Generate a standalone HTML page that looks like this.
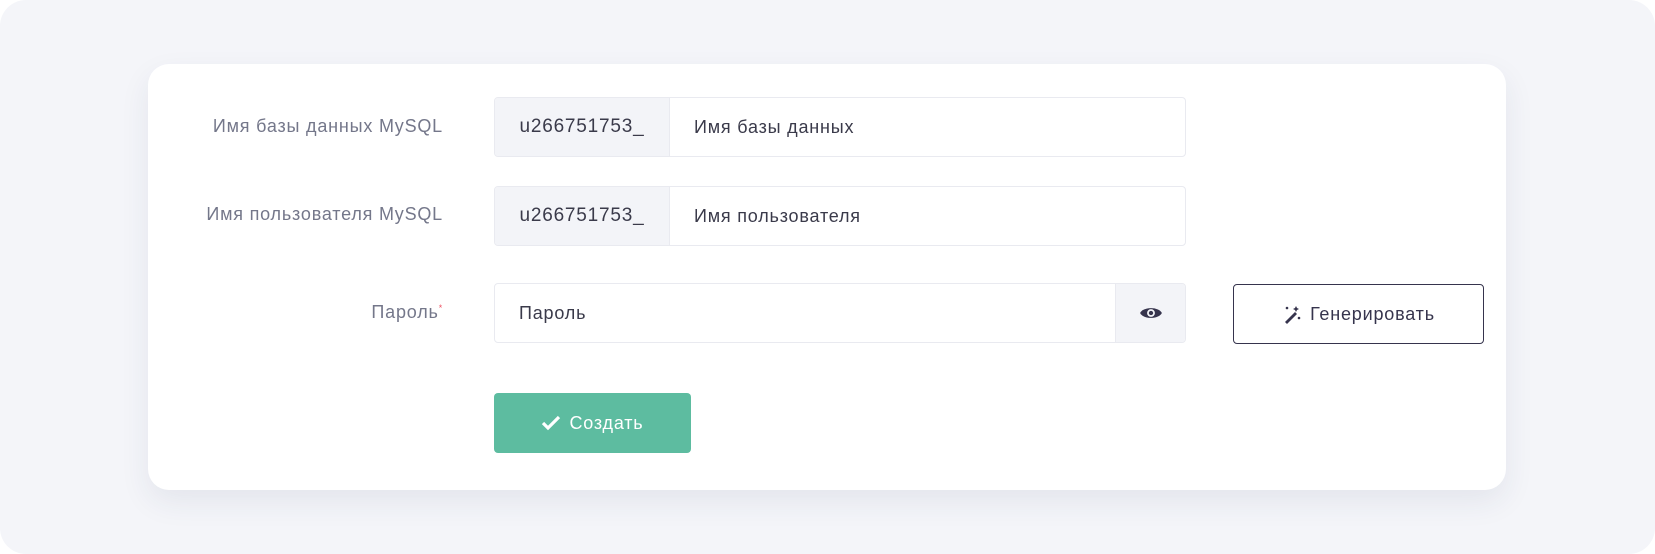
<!DOCTYPE html>
<html><head><meta charset="utf-8"><style>
body{margin:0;width:1655px;height:554px;background:#fff;font-family:"Liberation Sans",sans-serif;overflow:hidden;letter-spacing:0.8px}
.bg{position:absolute;left:0;top:0;width:1655px;height:554px;background:#f4f5f9;border-radius:26px}
.card{position:absolute;left:148px;top:64px;width:1358px;height:426px;background:#fff;border-radius:21px;box-shadow:0 12px 30px rgba(40,50,90,.08)}
.lbl{position:absolute;right:1212px;font-size:18px;color:#74778a;text-align:right;white-space:nowrap}
.in{position:absolute;left:494px;width:692px;height:60px;border:1px solid #e9eaf0;border-radius:4px;box-sizing:border-box;display:flex;overflow:hidden;font-size:18px}
.pre{width:174px;background:#f3f4f8;border-right:1px solid #e9eaf0;display:flex;align-items:center;justify-content:center;color:#3a3a4a;font-size:19px}
.ph{display:flex;align-items:center;padding-left:24px;color:#3a3a4a;flex:1}
.eye{width:69px;background:#f3f4f8;border-left:1px solid #e9eaf0;display:flex;align-items:center;justify-content:center}
.gen{position:absolute;left:1233px;top:284px;width:251px;height:60px;border:1px solid #36344d;border-radius:4px;box-sizing:border-box;display:flex;align-items:center;justify-content:center;font-size:18px;color:#36344d;gap:8px}
.btn{position:absolute;left:494px;top:393px;width:197px;height:60px;background:#5dbca0;border-radius:4px;color:#fff;display:flex;align-items:center;justify-content:center;font-size:18px;gap:8px}
</style></head><body>
<div class="bg"></div>
<div class="card"></div>
<div class="lbl" style="top:116px">Имя базы данных MySQL</div>
<div class="in" style="top:97px"><div class="pre">u266751753_</div><div class="ph">Имя базы данных</div></div>
<div class="lbl" style="top:204px">Имя пользователя MySQL</div>
<div class="in" style="top:186px"><div class="pre">u266751753_</div><div class="ph">Имя пользователя</div></div>
<div class="lbl" style="top:302px">Пароль<sup style="color:#e56;font-size:9px">*</sup></div>
<div class="in" style="top:283px"><div class="ph" style="padding-left:24px">Пароль</div><div class="eye"><svg width="24" height="18" viewBox="0 0 22 16"><path d="M1 8C4 2 18 2 21 8C18 14 4 14 1 8Z" fill="#36344d"/><circle cx="11" cy="8" r="3.6" fill="#f3f4f8"/><circle cx="11" cy="8" r="2" fill="#36344d"/></svg></div></div>
<div class="gen"><svg width="20" height="20" viewBox="0 0 20 20"><path d="M3 18L13 8l2 2L5 20z" fill="#36344d"/><path d="M14 2l1 2 2 1-2 1-1 2-1-2-2-1 2-1z" fill="#36344d"/><circle cx="5" cy="4" r="1.3" fill="#36344d"/><circle cx="17" cy="14" r="1.3" fill="#36344d"/></svg>Генерировать</div>
<div class="btn"><svg width="20" height="16" viewBox="0 0 20 16"><path d="M2 8l5 5L18 2" stroke="#fff" stroke-width="3.2" fill="none"/></svg>Создать</div>
</body></html>
